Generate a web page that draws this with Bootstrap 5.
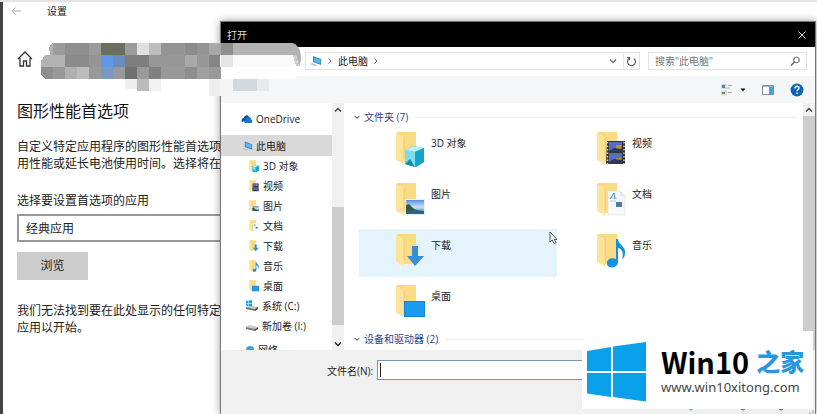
<!DOCTYPE html>
<html lang="zh-CN">
<head>
<meta charset="utf-8">
<meta name="viewport" content="width=device-width, initial-scale=1">
<title>图形性能首选项</title>
<link href="https://cdn.jsdelivr.net/npm/bootstrap@5.3.0/dist/css/bootstrap.min.css" rel="stylesheet">
<style>
body{font-family:"Open Sans","Noto Sans CJK SC",sans-serif;font-size:12px;line-height:17px;color:#222;background:#fff;overflow:hidden}
.desktop{border-top:2px solid #e4e4e4}
.settings{border-left:3px solid #444;padding-left:14px;white-space:nowrap}
.settings-bar{height:18px;gap:26px;font-size:10px;margin-left:-6px}
.settings-home{height:22px;margin-top:28px}
.settings h1{font-size:16px;line-height:24px;margin:29px 0 15px;font-weight:400;color:#111}
.settings p{margin-bottom:20px}
.settings label{display:block;margin-bottom:5px}
.app-select{appearance:none;width:240px;height:28px;border:2px solid #999;border-radius:0;background:#fff;padding:0 7px;color:#222}
.browse{width:71px;height:28px;background:#ccc;border:0;border-radius:0;margin:10px 0 22px;font-size:12px;padding:0}
.dialog{left:220px;right:1px;top:19px;bottom:0;border:1px solid #777;border-bottom:0;background:#fff;font-size:10px;line-height:14px;box-shadow:0 0 8px rgba(0,0,0,.4)}
.titlebar{height:25px;background:#000;color:#ddd;padding:0 8px 0 6px}
.plain{border:0;background:none;padding:0;display:flex;align-items:center;justify-content:center;color:inherit}
.nav-row{height:29px;padding:5px 8px 0 84px;gap:8px}
.address,.search{height:18px;border:1px solid #e2e2e2;background:#fff}
.address{padding-left:4px;gap:5px}
.address a{color:#222}
.refresh{width:16px;height:16px;border-left:1px solid #e8e8e8}
.search{width:159px;padding:0 5px 0 6px}
.search input{border:0;outline:0;padding:0;width:100px;background:none}
.search input::placeholder{color:#777;opacity:1}
.tools{height:27px;background:#f5f6f7;padding:0 11px;gap:16px}
.panes{min-height:0;height:247px;flex:none}
.tree{width:111px;padding-top:6px;overflow:hidden}
.tree .list-group-item{height:20px;flex:none;padding:0 0 0 24px;display:flex;align-items:center;gap:3px;border:0;border-radius:0;color:#222;background:none;white-space:nowrap}
.tree .list-group-item.onedrive{padding-left:20px;margin-bottom:6px}
.tree .list-group-item.current{padding-left:21px;background:#d9d9d9;height:21px}
.tree .list-group-item.child{padding-left:27px}
.tree .list-group-item.last{margin-top:4px}
.tree svg{flex:none}
.sbar{width:12px;background:#f0f0f0;flex:none}
.sbar .plain{height:13px;width:12px}
.tree-thumb{height:118px;margin-top:91px;background:#cdcdcd}
.main-thumb{background:#cdcdcd}
.files{padding:6px 6px 0 9px;overflow:hidden;min-width:0}
.group-title{font-size:10px;line-height:16px;margin:0;color:#2f3f8f;font-weight:400;gap:3px}
.group-title::after{content:"";flex:1;border-top:1px solid #eee;margin-left:4px}
.tiles{display:grid;grid-template-columns:repeat(auto-fill,198px);gap:3px;padding:2px 0 3px 6px}
.tile{height:48px;padding:4px 0 0 36px;gap:6px;color:#222;text-decoration:none}
.tile:hover,.tile.hot{background:#e5f3fd}
.tile span{padding-top:5px}
.footer{background:#f0f0f0;padding:10px 14px 0 106px}
.footer input{height:20px;border:1px solid #7599b5;border-radius:0;padding:0 2px;outline:0;background:#fff}
.caret-bar{width:1px;height:14px;background:#222;left:3px;top:3px}
.mosaic{left:38px;top:40px}
.pointer{left:549px;top:229px}
.brand{right:4px;bottom:5px;width:231px;height:78px;background:#fff;gap:14px;padding-left:5px}
.brand-logo{margin-top:4px}
.brand-name{font:700 29px/34px "Noto Sans CJK SC",sans-serif;color:#000;white-space:nowrap;gap:7px}
.brand-name b{font-size:24px;color:#2b96de}
.brand-url{font:13px/18px "Noto Sans","Open Sans",sans-serif;color:#444}
.brand-edge{right:0;bottom:0}
</style>
<script src="https://cdn.jsdelivr.net/npm/bootstrap@5.3.0/dist/js/bootstrap.bundle.min.js"></script>
</head>
<body>
<svg width="0" height="0" class="position-absolute" aria-hidden="true">
<defs>
<linearGradient id="fold" x2="1" y2="1"><stop stop-color="#f8d775"/><stop offset="1" stop-color="#fbe59d"/></linearGradient>
<linearGradient id="sky" x2="0" y2="1"><stop stop-color="#5a8be0"/><stop offset=".5" stop-color="#c7e3f5"/><stop offset="1" stop-color="#3a7a9c"/></linearGradient>
<symbol id="folder" viewBox="0 0 30 38"><path d="M1 2 3 1h18v30H8z" fill="url(#fold)"/><path d="M7 5 21 1v30H7z" fill="#f9dc85"/><path d="M1 2l8 4v29l-2-3-6-3z" fill="#fce49a"/><path d="M9 6v22" stroke="#e5bf5c" stroke-width=".6"/></symbol>
<symbol id="o-cube" viewBox="0 0 30 38"><path d="M10 19l8-4 11 2v14l-8 5-11-3z" fill="#19acd0"/><path d="M10 19l10 2v15l-10-3z" fill="#7fdcea"/><path d="M10 19l8-4 11 2-9 4z" fill="#b8f0f6"/><path d="M20 21l9-4v14l-8 5z" fill="#16a3cb"/><path d="M10 33l5-5 5 8z" fill="#0f8fab"/></symbol>
<symbol id="o-video" viewBox="0 0 30 38"><path d="M11 10h18v23H10z" fill="#343434"/><path d="M13 11h13v10H13zM13 22h13v10H13z" fill="#516fc5"/><path d="M20 14h5v5h-5zM20 27h5v4h-5z" fill="#b99035"/><path d="M13 20l5-3 8 1v3H13zM13 31l5-3 8 1v3H13z" fill="#2b3a60"/><path d="M11.500 11v22M28 11v22" stroke="#ddd" stroke-width="1.400" stroke-dasharray="1.500 2"/></symbol>
<symbol id="o-picture" viewBox="0 0 30 38"><path d="M10 17h20v16H10z" fill="#eee"/><path d="M11 18h18v14H11z" fill="url(#sky)"/><path d="M11 23l5 3 6 2 7 1v3H11z" fill="#2d6480"/><path d="M11 23l3-1 6 6-9 2z" fill="#355846"/></symbol>
<symbol id="o-doc" viewBox="0 0 30 38"><path d="M12 9h12l5 5v19H12z" fill="#f5f8fb" stroke="#d5dde4" stroke-width=".5"/><path d="M24 9v5h5" fill="#dde5ed"/><path d="M14 16h7M14 19h6" stroke="#b2c8da"/><path d="M14 17l4-6 1 6" stroke="#3b8bbf" fill="none"/><path d="M20 20h6v5h-6z" fill="#4a7ca3"/></symbol>
<symbol id="o-down" viewBox="0 0 30 38"><path d="M17 13h6v10h6l-9 10-8-10h5z" fill="#338ee0"/></symbol>
<symbol id="o-note" viewBox="0 0 30 38"><path d="M20 6h2c0 6 8 7 7 14 0 3-1 5-3 6 2-7 0-10-4-11v14c0 7-12 7-11 1 0-4 5-6 9-4z" fill="#1390e2"/></symbol>
<symbol id="o-desk" viewBox="0 0 30 38"><path d="M9 17h21v16H9z" fill="#1585cf"/><path d="M10 18h19v14H10z" fill="#1b9cf1"/></symbol>
<symbol id="pc" viewBox="0 0 12 12"><path d="M3 1l8 3v6L3 7z" fill="#2c8bc5"/><path d="M4 2.500l6.300 2.200v4L4 6.300z" fill="#5fb8ea"/><path d="M1 8l6 2-2 1.500-4-2z" fill="#b9c7d1"/></symbol>
<symbol id="disk" viewBox="0 0 14 12"><path d="M1 7l3-2 9 2-3 2z" fill="#ccc"/><path d="M1 7l9 2v2L1 9z" fill="#777"/><path d="M10 9l3-2v2l-3 2z" fill="#444"/></symbol>
<symbol id="up" viewBox="0 0 10 10"><path d="M2 6.500 5 3.500l3 3" fill="none" stroke="#444" stroke-width="1.500"/></symbol>
<symbol id="dn" viewBox="0 0 10 10"><path d="M2 3.500l3 3 3-3" fill="none" stroke="currentColor" stroke-width="1.300"/></symbol>
<symbol id="rt" viewBox="0 0 6 10"><path d="M1.500 2.500 4 5 1.500 7.500" fill="none" stroke="#666"/></symbol>
</defs>
</svg>

<div class="desktop position-relative vh-100 overflow-hidden">
<main class="settings h-100">
  <div class="settings-bar d-flex align-items-center">
    <button class="plain" aria-label="返回"><svg width="10" height="10" viewBox="0 0 10 10"><path d="M10 5H1M4.500 1.500 1 5l3.500 3.500" fill="none" stroke="#aaa"/></svg></button>
    <span>设置</span>
  </div>
  <a class="settings-home d-flex align-items-center" href="#" aria-label="主页"><svg width="16" height="18" viewBox="0 0 16 18"><path d="M1 9 8 2l7 7M3 8v8h3.500v-5h3v5H13V8" fill="none" stroke="#333" stroke-width="1.300"/></svg></a>
  <h1>图形性能首选项</h1>
  <p>自定义特定应用程序的图形性能首选项。<br>用性能或延长电池使用时间。选择将在下</p>
  <label for="kind">选择要设置首选项的应用</label>
  <select id="kind" class="app-select d-block"><option>经典应用</option></select>
  <button class="btn browse d-block">浏览</button>
  <p>我们无法找到要在此处显示的任何特定于<br>应用以开始。</p>
</main>

<section class="dialog position-absolute d-flex flex-column" role="dialog" aria-label="打开">
  <header class="titlebar d-flex align-items-center justify-content-between flex-shrink-0">
    <span>打开</span>
    <button class="plain" aria-label="关闭"><svg width="10" height="10" viewBox="0 0 10 10"><path d="M1.500 1.500l7 7M8.500 1.500l-7 7" stroke="#ddd"/></svg></button>
  </header>
  <div class="nav-row d-flex flex-shrink-0">
    <nav class="address d-flex align-items-center flex-grow-1">
      <svg width="12" height="12"><use href="#pc"/></svg>
      <svg width="6" height="10"><use href="#rt"/></svg>
      <a class="text-decoration-none" href="#">此电脑</a>
      <svg width="6" height="10"><use href="#rt"/></svg>
      <button class="plain ms-auto text-secondary" aria-label="历史"><svg width="10" height="10"><use href="#dn"/></svg></button>
      <button class="plain refresh" aria-label="刷新"><svg width="11" height="11" viewBox="0 0 11 11"><path d="M3 2.500A4 4 0 1 0 8 2.500M1 1.500h2.500V4" fill="none" stroke="#555" stroke-width="1.100"/></svg></button>
    </nav>
    <div class="search d-flex align-items-center justify-content-between">
      <input type="search" aria-label="搜索" placeholder='搜索"此电脑"'>
      <svg width="11" height="11" viewBox="0 0 11 11"><circle cx="6.500" cy="4" r="2.800" fill="none" stroke="#555"/><path d="M4.500 6 1 9.500" stroke="#555" stroke-width="1.200"/></svg>
    </div>
  </div>
  <div class="tools d-flex align-items-center justify-content-end flex-shrink-0">
    <button class="plain gap-2" aria-label="视图"><svg width="12" height="13" viewBox="0 0 12 13"><path d="M1 1h6v5H1zM1 7.500h6v5H1z" fill="#d5dae0"/><path d="M2 2h3v3H2z" fill="#6674b8"/><path d="M2 9h3v2H2z" fill="#7d9440"/><path d="M8 2.500h4M8 9.500h4M7 5h3" stroke="#aaa"/></svg><svg width="6" height="4" viewBox="0 0 6 4"><path d="M.5.5h5L3 3.500z" fill="#111"/></svg></button>
    <button class="plain" aria-label="预览窗格"><svg width="12" height="10" viewBox="0 0 12 10"><path d="M.5.500h11v9H.5z" fill="#fff" stroke="#7d8da0"/><path d="M7 1h4v8H7z" fill="#45a3db"/><path d="M1 1.500h10" stroke="#9fb7c7"/></svg></button>
    <button class="plain" aria-label="帮助"><svg width="14" height="14" viewBox="0 0 14 14"><circle cx="7" cy="7" r="6.500" fill="#0b66b7"/><path d="M5 5.500c0-3 4-3 4-.5 0 1.500-2 1.500-2 3.300M7 9.500V11" fill="none" stroke="#fff" stroke-width="1.400"/></svg></button>
  </div>
  <div class="panes d-flex">
    <nav class="tree list-group rounded-0 flex-shrink-0 flex-nowrap">
      <a href="#" class="list-group-item onedrive"><svg width="12" height="10" viewBox="0 0 12 10"><path d="M1 8C-.5 5 2 4 3 4c0-3 4-4 5-1 1 0 2 1 2 2z" fill="#0b4fa5"/><path d="M4 9C2 7 4 5 5 5c1-3 4-2 4 0 3 0 3 4 1 4z" fill="#1673ce"/></svg>OneDrive</a>
      <a href="#" class="list-group-item current"><svg width="11" height="12"><use href="#pc"/></svg>此电脑</a>
      <a href="#" class="list-group-item child"><svg width="12" height="13"><use href="#folder"/><use href="#o-cube"/></svg>3D 对象</a>
      <a href="#" class="list-group-item child"><svg width="12" height="13"><use href="#folder"/><use href="#o-video"/></svg>视频</a>
      <a href="#" class="list-group-item child"><svg width="12" height="13"><use href="#folder"/><use href="#o-picture"/></svg>图片</a>
      <a href="#" class="list-group-item child"><svg width="12" height="13"><use href="#folder"/><use href="#o-doc"/></svg>文档</a>
      <a href="#" class="list-group-item child"><svg width="12" height="13"><use href="#folder"/><use href="#o-down"/></svg>下载</a>
      <a href="#" class="list-group-item child"><svg width="12" height="13"><use href="#folder"/><use href="#o-note"/></svg>音乐</a>
      <a href="#" class="list-group-item child"><svg width="12" height="13"><use href="#folder"/><use href="#o-desk"/></svg>桌面</a>
      <a href="#" class="list-group-item"><svg width="14" height="12" viewBox="0 0 14 12"><use href="#disk"/><path d="M1 1l2.500-.5V3H1zM4 .5 7 0v3H4zM1 3.500h2.500V6L1 5.500zM4 3.500h3v3L4 6z" fill="#19a5e6"/></svg>系统 (C:)</a>
      <a href="#" class="list-group-item"><svg width="14" height="12"><use href="#disk"/></svg>新加卷 (I:)</a>
      <a href="#" class="list-group-item last"><svg width="10" height="10" viewBox="0 0 10 10"><circle cx="5" cy="5" r="4" fill="#3fa0d8"/></svg>网络</a>
    </nav>
    <div class="sbar d-flex flex-column">
      <button class="plain" aria-label="向上滚动"><svg width="10" height="10"><use href="#up"/></svg></button>
      <div class="tree-thumb"></div>
      <button class="plain mt-auto" aria-label="向下滚动"><svg width="10" height="10"><use href="#dn"/></svg></button>
    </div>
    <div class="files flex-grow-1">
      <h2 class="group-title d-flex align-items-center"><svg width="8" height="8" class="text-secondary" viewBox="0 0 10 10"><use href="#dn"/></svg>文件夹 (7)</h2>
      <div class="tiles">
        <a class="tile d-flex" href="#"><svg width="30" height="38"><use href="#folder"/><use href="#o-cube"/></svg><span>3D 对象</span></a>
        <a class="tile d-flex" href="#"><svg width="30" height="38"><use href="#folder"/><use href="#o-video"/></svg><span>视频</span></a>
        <a class="tile d-flex" href="#"><svg width="30" height="38"><use href="#folder"/><use href="#o-picture"/></svg><span>图片</span></a>
        <a class="tile d-flex" href="#"><svg width="30" height="38"><use href="#folder"/><use href="#o-doc"/></svg><span>文档</span></a>
        <a class="tile hot d-flex" href="#"><svg width="30" height="38"><use href="#folder"/><use href="#o-down"/></svg><span>下载</span></a>
        <a class="tile d-flex" href="#"><svg width="30" height="38"><use href="#folder"/><use href="#o-note"/></svg><span>音乐</span></a>
        <a class="tile d-flex" href="#"><svg width="30" height="38"><use href="#folder"/><use href="#o-desk"/></svg><span>桌面</span></a>
      </div>
      <h2 class="group-title d-flex align-items-center"><svg width="8" height="8" class="text-secondary" viewBox="0 0 10 10"><use href="#dn"/></svg>设备和驱动器 (2)</h2>
    </div>
    <div class="sbar d-flex flex-column">
      <button class="plain" aria-label="向上滚动"><svg width="10" height="10"><use href="#up"/></svg></button>
      <div class="main-thumb flex-grow-1"></div>
    </div>
  </div>
  <footer class="footer flex-grow-1 d-flex align-items-start">
    <label for="fname" class="me-1 pt-1 text-nowrap">文件名(N):</label>
    <div class="position-relative flex-grow-1"><input id="fname" type="text" class="w-100 d-block"><span class="caret-bar position-absolute"></span></div>
  </footer>
</section>

<svg class="mosaic position-absolute" width="266" height="56" viewBox="38 42 266 56" shape-rendering="crispEdges" aria-hidden="true">
<path d="M53 43h-1c-3 2-3 6-2 12h3z" fill="#b0b0b0"/><path d="M233 43h58c8 0 13 12 8 24l-3-12h-63z" fill="#b3b3b3" shape-rendering="auto"/>
<path d="M53 43h12v12H53zM89 43h12v12H89zM125 43h12v12h-12z" fill="#9b9b9b"/><path d="M65 43h24v12H65zM221 43h12v12h-12z" fill="#8f8f8f"/><path d="M101 43h24v12h-24z" fill="#6c6f5c"/><path d="M137 43h12v12h-12z" fill="#e0e0e0"/><path d="M149 43h12v12h-12z" fill="#bdbdbd"/><path d="M161 43h48v12h-48z" fill="#949494"/><path d="M185 43h12v12h-12z" fill="#8c8c8c"/><path d="M209 43h12v12h-12z" fill="#a8a8a8"/>
<path d="M45 55h20v12H41v-6z" fill="#b3b3b3"/><path d="M65 55h24v12H65z" fill="#8b8b8b"/><path d="M89 55h12v12H89z" fill="#959595"/><path d="M101 55h12v12h-12z" fill="#6297e5"/><path d="M113 55h12v12h-12z" fill="#6a8bbd"/><path d="M125 55h24v12h-24z" fill="#7e7e7e"/><path d="M149 55h60v12h-60z" fill="#979797"/><path d="M185 55h12v12h-12z" fill="#a9a9a9"/><path d="M209 55h12v12h-12z" fill="#858585"/>
<path d="M220 55h76v24h-76z" fill="#fff"/><path d="M221 55h12v12h-12z" fill="#e5e5e8"/><path d="M233 55h60v12h-60z" fill="#fafafa"/><path d="M293 55h3l2 11h-2z" fill="#ccc"/>
<path d="M41 67h12v12h-8l-4-4z" fill="#8f8f8f"/><path d="M53 67h168v12H53z" fill="#999"/><path d="M65 67h12v12H65z" fill="#b0b0b0"/><path d="M77 67h12v12H77z" fill="#bcbcbc"/><path d="M101 67h12v12h-12z" fill="#7899c4"/><path d="M125 67h12v12h-12z" fill="#707070"/><path d="M149 67h12v12h-12z" fill="#808080"/><path d="M185 67h12v12h-12z" fill="#8e8e8e"/><path d="M197 67h12v12h-12z" fill="#a0a0a0"/>
<path d="M125 79h12v10h-12zM209 79h12v17h-12z" fill="#eee"/><path d="M137 79h12v12h-12z" fill="#bbb"/><path d="M149 79h12v12h-12z" fill="#f2f2f2"/><path d="M220 79h13v17h-13z" fill="#f5f5f6"/><path d="M233 79h24v12h-24z" fill="#d3d8de"/><path d="M257 79h12v12h-12z" fill="#e7e9ed"/>
</svg>

<svg class="pointer position-absolute" width="9" height="14" viewBox="0 0 9 14" aria-hidden="true"><path d="M1 1v10l2.300-2L5 12.500l2-1-1.700-3H8z" fill="#fff" stroke="#555"/></svg>

<aside class="brand position-absolute d-flex align-items-center">
  <svg width="60" height="60" viewBox="0 0 60 60" class="brand-logo flex-shrink-0" aria-hidden="true"><path d="M0 9l24-4v24H0zM26 4.500 59 0v29H26zM0 31h24v24L0 51.500zM26 31h33v28.500L26 55z" fill="#0aa0ea"/></svg>
  <div><div class="brand-name d-flex align-items-center"><span>Win10</span><b>之家</b></div><div class="brand-url">www.win10xitong.com</div></div>
</aside>
<svg class="brand-edge position-absolute" width="130" height="5" viewBox="0 0 130 5" aria-hidden="true"><path d="M2 0h4l-2 2z" fill="#5fa8e0"/><path d="M54 0q2 2 4 0M92 0q2 2 4 0" fill="none" stroke="#444"/><path d="M122 4h2M125 2h2M125 4h2" stroke="#999"/></svg>
</div>
</body>
</html>
